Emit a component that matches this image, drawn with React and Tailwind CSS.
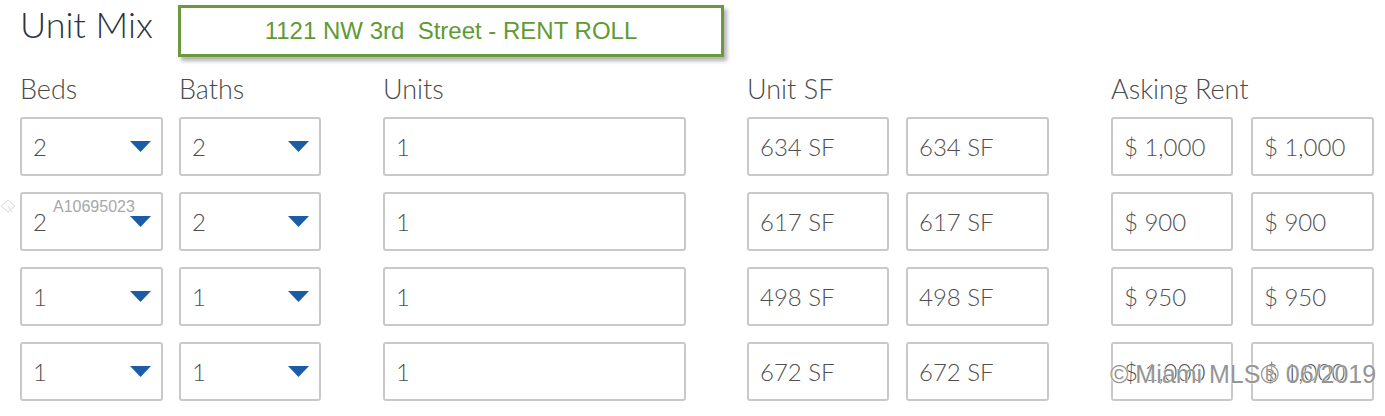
import React from "react";

const Arrow = () => (
  <svg width="21" height="11" viewBox="0 0 21 11" className="shrink-0">
    <polygon points="0,0 21,0 10.5,11" fill="#1b5ca6" />
  </svg>
);

const Box = ({ w, value, select }) => (
  <div
    className={`${w} h-[59px] border-2 border-[#c9c9c9] rounded-[3px] bg-white flex items-center justify-between pl-[11px] pr-[10px] text-[24px] text-[#4f4f4f] font-light`}
  >
    <span>{value}</span>
    {select && <Arrow />}
  </div>
);

const Label = ({ children }) => (
  <div className="h-[55px] pt-[11px] text-[27px] leading-[32px] text-[#4a4a4a] font-light whitespace-nowrap">
    {children}
  </div>
);

export default function App() {
  const beds = ["2", "2", "1", "1"];
  const baths = ["2", "2", "1", "1"];
  const units = ["1", "1", "1", "1"];
  const sf = ["634 SF", "617 SF", "498 SF", "672 SF"];
  const rent = ["$ 1,000", "$ 900", "$ 950", "$ 1,000"];

  return (
    <div
      className="relative w-[1385px] h-[416px] bg-white pl-[20px] overflow-hidden"
      style={{ fontFamily: "Lato, 'Open Sans', sans-serif" }}
    >
      <div className="flex h-[62px]">
        <div className="w-[158px] pt-[2px] text-[36px] leading-[44px] text-[#2d3340] font-light whitespace-nowrap">
          Unit Mix
        </div>
        <div
          className="mt-[5px] w-[546px] h-[52px] border-[3px] border-[#6b9a3e] bg-white flex items-center justify-center shadow-[3px_4px_4px_rgba(0,0,0,0.3)] text-[24px] text-[#5f9a35]"
          style={{ fontFamily: "'Liberation Sans', Arial, sans-serif" }}
        >
          <span className="whitespace-pre">1121 NW 3rd  Street - RENT ROLL</span>
        </div>
      </div>

      <div className="flex">
        <div className="flex flex-col w-[143px]">
          <Label>Beds</Label>
          <div className="flex flex-col gap-[16px]">
            {beds.map((v, i) => (
              <Box key={i} w="w-[143px]" value={v} select />
            ))}
          </div>
        </div>
        <div className="flex flex-col w-[142px] ml-[16px]">
          <Label>Baths</Label>
          <div className="flex flex-col gap-[16px]">
            {baths.map((v, i) => (
              <Box key={i} w="w-[142px]" value={v} select />
            ))}
          </div>
        </div>
        <div className="flex flex-col w-[303px] ml-[62px]">
          <Label>Units</Label>
          <div className="flex flex-col gap-[16px]">
            {units.map((v, i) => (
              <Box key={i} w="w-[303px]" value={v} />
            ))}
          </div>
        </div>
        <div className="flex flex-col ml-[61px]">
          <Label>Unit SF</Label>
          <div className="flex flex-col gap-[16px]">
            {sf.map((v, i) => (
              <div key={i} className="flex gap-[17px]">
                <Box w="w-[142px]" value={v} />
                <Box w="w-[143px]" value={v} />
              </div>
            ))}
          </div>
        </div>
        <div className="flex flex-col ml-[62px]">
          <Label>Asking Rent</Label>
          <div className="flex flex-col gap-[16px]">
            {rent.map((v, i) => (
              <div key={i} className="flex gap-[18px]">
                <Box w="w-[122px]" value={v} />
                <Box w="w-[123px]" value={v} />
              </div>
            ))}
          </div>
        </div>
      </div>

      <svg className="absolute left-[0px] top-[197px]" width="18" height="18" viewBox="0 0 18 18">
        <path d="M1 9 L8 3 L15 9 L8 15 Z M8 9 L12 15" fill="none" stroke="#dadada" strokeWidth="1" />
      </svg>
      <div
        className="absolute left-[53px] top-[195px] text-[16px] text-[#a8a8a8]"
        style={{ fontFamily: "'Liberation Sans', Arial, sans-serif" }}
      >
        A10695023
      </div>
      <div
        className="absolute left-[1110px] top-[356px] text-[25px] text-[#959595] whitespace-nowrap"
        style={{
          fontFamily: "'Liberation Sans', Arial, sans-serif",
          textShadow: "0 0 1px #fff, 0 0 2px #fff",
        }}
      >
        © Miami MLS® 06/2019
      </div>
    </div>
  );
}
